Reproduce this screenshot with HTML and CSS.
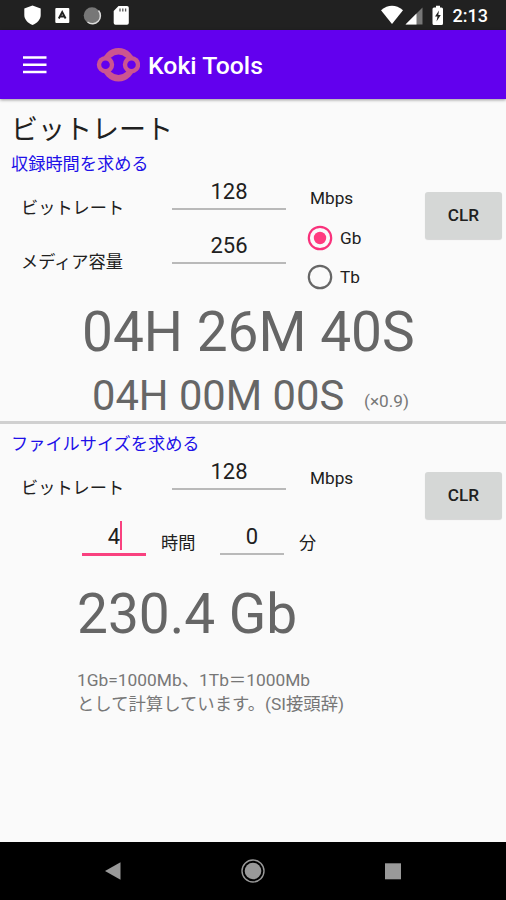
FILE: index.html
```html
<!DOCTYPE html>
<html lang="ja">
<head>
<meta charset="utf-8">
<title>Koki Tools</title>
<link rel="stylesheet" href="styles.css">
</head>
<body>
<div class="screen">
  <div class="status">
    <svg width="140" height="30" viewBox="0 0 140 30">
      <path fill="#fff" d="M32.500 5.500l8.200 3v6.500c0 4.500-3.500 8-8.200 10-4.700-2-8.200-5.500-8.200-10V8.500z"/>
      <rect x="55.300" y="8" width="14" height="15" rx="1" fill="#fff"/>
      <path d="M58.800 18.500L62.200 12L65.600 18.500M60.300 16.500H64" fill="none" stroke="#222" stroke-width="1.900"/>
      <circle cx="92" cy="15.500" r="8.300" fill="#777"/>
      <path d="M98.500 10.500A8 8 0 0 1 87.500 22" fill="none" stroke="#ddd" stroke-width="1.500"/>
      <path fill="#fff" d="M118.500 6H127a1.800 1.800 0 0 1 1.800 1.800V23a1.800 1.800 0 0 1-1.800 1.800H115.500a1.800 1.800 0 0 1-1.800-1.800V11z"/>
      <path d="M120 8.500v3M122.800 8.500v3M125.600 8.500v3" stroke="#555" stroke-width="1.300"/>
    </svg>
    <div class="status-right">
      <svg width="66" height="30" viewBox="0 0 66 30">
        <path fill="#fff" d="M1 10.200Q12 1.500 23 10.200L12 24z"/>
        <path fill="#777" d="M42.500 7.500V24.500H25.500z"/>
        <path fill="#fff" d="M36.500 13.500V24.500H25.500z"/>
        <path fill="#fff" d="M56 5.800h4V7.500h1.500a1.500 1.500 0 0 1 1.500 1.500V23.500a1.500 1.500 0 0 1-1.500 1.500H54a1.500 1.500 0 0 1-1.500-1.500V9A1.500 1.500 0 0 1 54 7.500h2z"/>
        <path fill="#222" d="M59 10.500L55 16.500H57.500L56.500 21.500L60.800 15H58.300z"/>
      </svg>
      <span class="clock">2:13</span>
    </div>
  </div>
  <header class="appbar">
    <svg class="menu" width="24" height="20" viewBox="0 0 24 20"><path d="M0 2.500H23.500M0 9.800H23.500M0 17H23.500" stroke="#fff" stroke-width="2.500"/></svg>
    <svg class="logo" width="44" height="36" viewBox="0 0 44 36">
      <g fill="#cc5590">
        <circle cx="22.500" cy="17.700" r="16.700"/>
        <circle cx="22.500" cy="17.700" r="10.300" fill="#6200ee"/>
        <circle cx="9.500" cy="17.700" r="8.700"/>
        <circle cx="35.500" cy="17.700" r="8.700"/>
      </g>
      <g fill="#6200ee"><circle cx="9.500" cy="17.700" r="4.300"/><circle cx="35.500" cy="17.700" r="4.300"/></g>
    </svg>
    <h1 class="title">Koki Tools</h1>
  </header>
  <main class="content">
    <section class="record">
      <h2 class="heading">ビットレート</h2>
      <h3 class="sub">収録時間を求める</h3>
      <div class="form">
        <div class="labels"><span>ビットレート</span><span>メディア容量</span></div>
        <div class="fields"><div class="field">128</div><div class="field second">256</div></div>
        <div class="units">
          <span class="unit">Mbps</span>
          <div class="radio"><svg width="26" height="26" viewBox="0 0 26 26"><circle cx="13" cy="13" r="11.200" fill="none" stroke="#f9317b" stroke-width="2.200"/><circle cx="13" cy="13" r="6.200" fill="#ff3b80"/></svg>Gb</div>
          <div class="radio"><svg width="26" height="26" viewBox="0 0 26 26"><circle cx="13" cy="13" r="11.200" fill="none" stroke="#666" stroke-width="2.200"/></svg>Tb</div>
        </div>
        <div class="clear">CLR</div>
      </div>
      <div class="result">04H 26M 40S</div>
      <div class="result-row"><span class="result-small">04H 00M 00S</span><span class="factor">(×0.9)</span></div>
    </section>
    <section class="size">
      <h3 class="sub">ファイルサイズを求める</h3>
      <div class="form short">
        <div class="labels"><span>ビットレート</span></div>
        <div class="fields"><div class="field">128</div></div>
        <div class="units"><span class="unit">Mbps</span></div>
        <div class="clear">CLR</div>
      </div>
      <div class="time">
        <div class="field small active">4<i class="caret"></i></div>
        <span class="hours">時間</span>
        <div class="field small">0</div>
        <span class="minutes">分</span>
      </div>
      <div class="total">230.4 Gb</div>
      <p class="note">1Gb=1000Mb、1Tb＝1000Mb<br>として計算しています。(SI接頭辞)</p>
    </section>
  </main>
  <nav class="navbar">
    <svg width="26" height="26" viewBox="0 0 26 26"><path d="M5 13L20.500 4.300V21.700z" fill="#999"/></svg>
    <svg width="26" height="26" viewBox="0 0 26 26"><circle cx="13" cy="13" r="11" fill="none" stroke="#999" stroke-width="1.400"/><circle cx="13" cy="13" r="8.300" fill="#999"/></svg>
    <svg width="26" height="26" viewBox="0 0 26 26"><rect x="5" y="5.300" width="16" height="16" fill="#999"/></svg>
  </nav>
</div>
</body>
</html>
```
FILE: styles.css
```css
* { box-sizing: border-box; }
body { margin: 0; font-family: Roboto, "Noto Sans CJK JP", sans-serif; font-size: 17.2px; color: #202020; }
h1, h2, h3, p { margin: 0; font-weight: 400; }
svg { display: block; flex: none; }
.screen { width: 506px; height: 900px; display: flex; flex-direction: column; background: #fafafa; overflow: hidden; }
.status { height: 30px; background: #212121; display: flex; justify-content: space-between; flex: none; }
.status-right { display: flex; width: 126px; }
.clock { color: #fff; font-size: 18px; font-weight: 500; line-height: 32px; margin-left: 6.5px; }
.appbar { height: 69px; flex: none; background: #6200ee; display: flex; align-items: center; padding-left: 23px; box-shadow: 0 1px 3px rgba(0, 0, 0, .4); }
.menu { margin-top: 1px; }
.logo { margin-left: 49px; }
.title { margin-left: 8px; padding-top: 2px; font-size: 24.8px; font-weight: 500; color: #fff; white-space: nowrap; }
.content { flex: 1; }
.record { height: 325px; padding-top: 15px; border-bottom: 3px solid #d0d0d0; }
.heading { padding-left: 11px; font-size: 27px; line-height: 32px; }
.sub { padding-left: 11px; font-size: 17.2px; line-height: 24px; color: #2010e8; }
.record .sub { margin-top: 6px; }
.form { display: flex; height: 120px; padding-left: 21px; }
.short { height: 68px; }
.labels { width: 151px; padding-top: 20px; display: flex; flex-direction: column; gap: 30px; line-height: 24px; }
.fields { width: 114px; }
.field { height: 34px; padding-top: 3px; font-size: 22px; line-height: 26px; text-align: center; border-bottom: 2px solid #b9b9b9; }
.second { margin-top: 20px; }
.units { width: 139px; padding-left: 24px; }
.unit { display: block; line-height: 24px; margin-top: 10px; }
.radio { display: flex; align-items: center; gap: 7px; height: 39px; margin-left: -3px; }
.unit + .radio { margin-top: 8px; }
.clear { width: 77px; height: 47px; margin-top: 16px; border-radius: 3px; background: #d5d7d6; box-shadow: 0 1px 1px rgba(0, 0, 0, .15); font-weight: 500; line-height: 47px; text-align: center; }
.result { margin-top: 4px; padding-left: 82px; height: 64px; font-size: 55px; line-height: 64px; color: #666; white-space: nowrap; }
.result-row { display: flex; align-items: flex-start; padding-left: 92px; height: 57px; line-height: 64px; color: #666; white-space: nowrap; }
.result-small { font-size: 41.7px; width: 272px; }
.factor { padding-top: 5px; color: #777; }
.size { padding-top: 8px; }
.time { display: flex; height: 32px; padding-left: 82px; }
.small { width: 64px; height: 31px; padding-top: 0; }
.active { position: relative; height: 32px; border-bottom: 3px solid #f9417f; }
.caret { position: absolute; left: 38px; top: -3px; width: 2px; height: 29px; background: #f9417f; }
.hours { width: 59px; margin-left: 15px; line-height: 38px; }
.minutes { margin-left: 15px; line-height: 38px; }
.total { margin-top: 26px; padding-left: 77px; font-size: 55px; line-height: 64px; color: #666; }
.note { margin-top: 22px; padding-left: 77px; font-size: 17.35px; line-height: 24px; color: #777; }
.navbar { height: 58px; flex: none; background: #000; display: flex; justify-content: center; align-items: center; gap: 114px; }
```
